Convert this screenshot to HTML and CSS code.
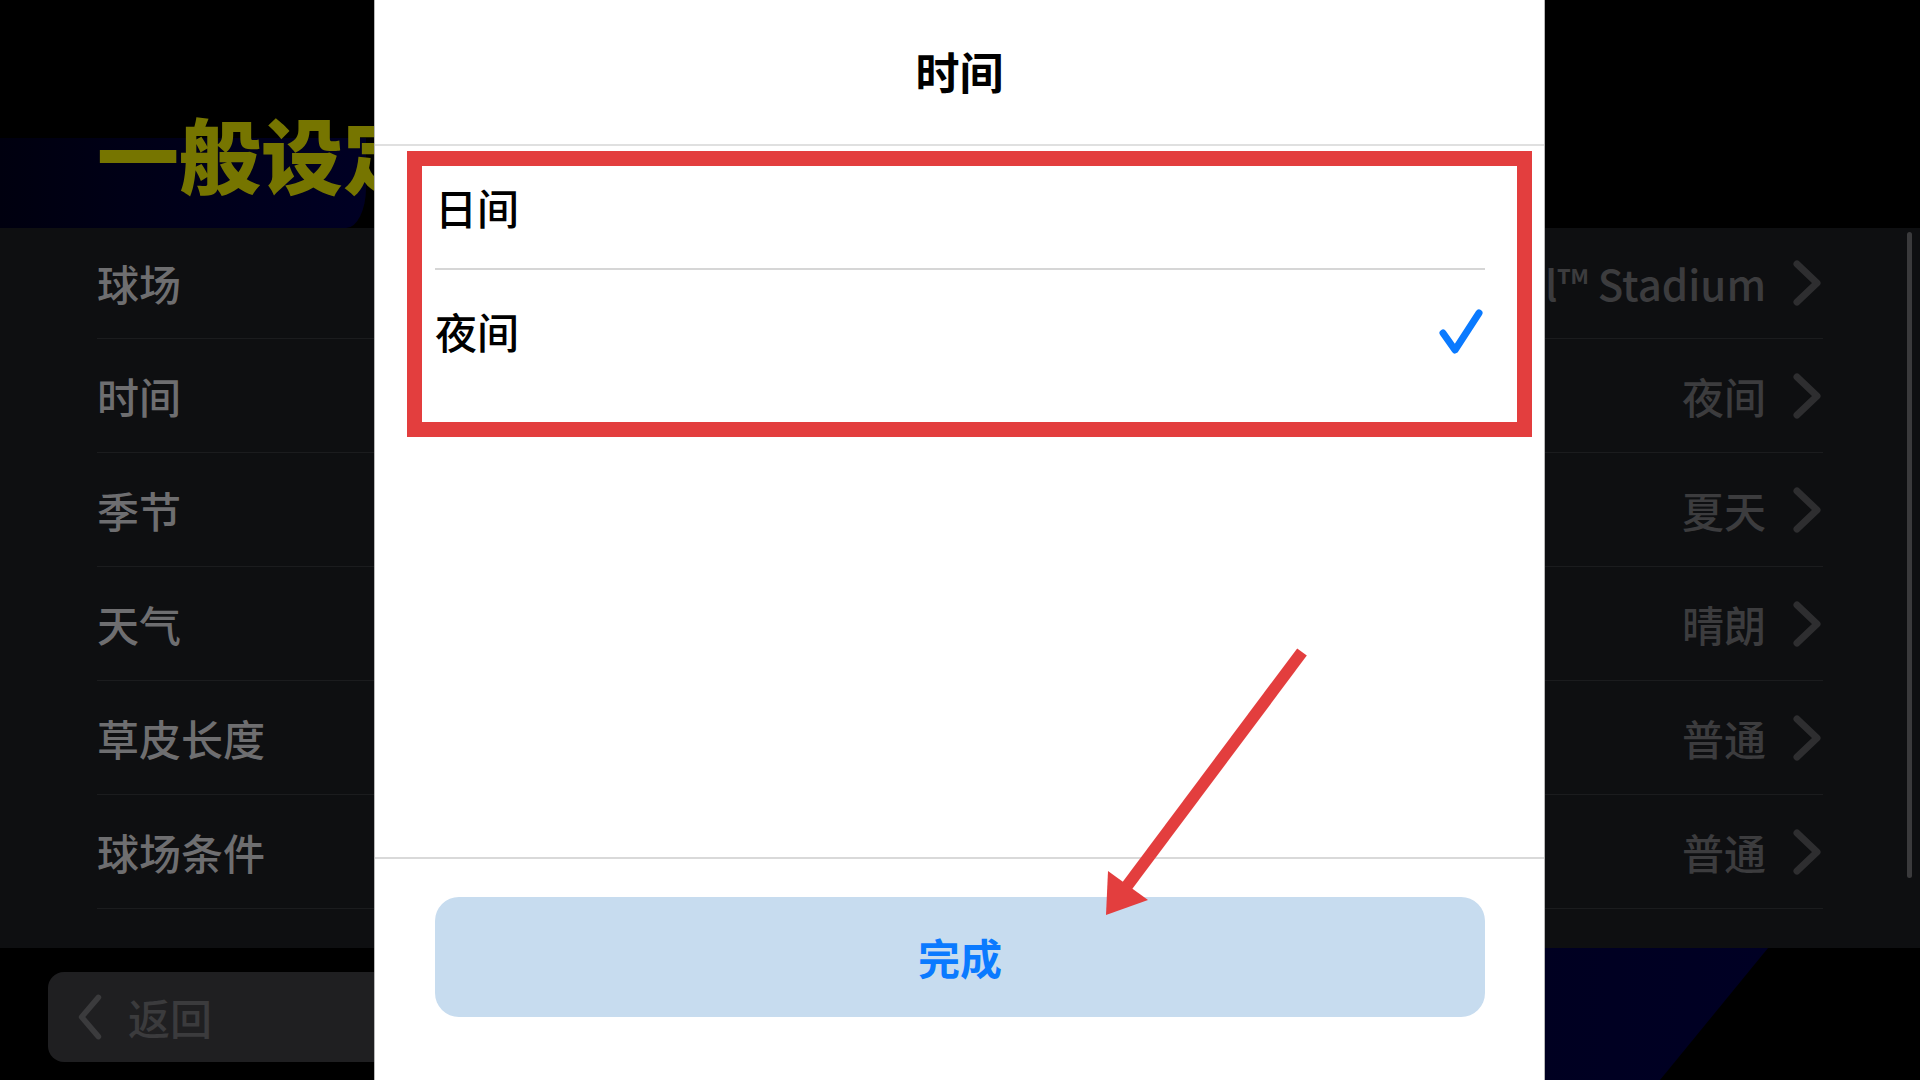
FILE: index.html
```html
<!DOCTYPE html>
<html lang="zh-CN">
<head>
<meta charset="utf-8">
<title>时间</title>
<link rel="stylesheet" href="styles.css">
</head>
<body>
<div class="app">
  <header class="top">
    <h1 class="page-title">一般设定</h1>
  </header>
  <main class="list-wrap">
    <ul class="list">
      <li class="row"><span class="label">球场</span><span class="value">eFootball™ Stadium</span><svg class="chev" viewBox="0 0 30 48"><path d="M5 5 L25 24 L5 43"/></svg></li>
      <li class="row"><span class="label">时间</span><span class="value">夜间</span><svg class="chev" viewBox="0 0 30 48"><path d="M5 5 L25 24 L5 43"/></svg></li>
      <li class="row"><span class="label">季节</span><span class="value">夏天</span><svg class="chev" viewBox="0 0 30 48"><path d="M5 5 L25 24 L5 43"/></svg></li>
      <li class="row"><span class="label">天气</span><span class="value">晴朗</span><svg class="chev" viewBox="0 0 30 48"><path d="M5 5 L25 24 L5 43"/></svg></li>
      <li class="row"><span class="label">草皮长度</span><span class="value">普通</span><svg class="chev" viewBox="0 0 30 48"><path d="M5 5 L25 24 L5 43"/></svg></li>
      <li class="row"><span class="label">球场条件</span><span class="value">普通</span><svg class="chev" viewBox="0 0 30 48"><path d="M5 5 L25 24 L5 43"/></svg></li>
      <li class="row row-peek"><span class="peek-mark"></span><svg class="chev" viewBox="0 0 30 48"><path d="M5 5 L25 24 L5 43"/></svg></li>
    </ul>
    <div class="scrollbar"></div>
  </main>
  <footer class="bottom">
    <button class="back"><svg class="back-chev" viewBox="0 0 30 50"><path d="M24 4 L6 25 L24 46"/></svg><span>返回</span></button>
  </footer>
</div>

<section class="sheet">
  <div class="sheet-head">时间</div>
  <div class="options">
    <div class="option">日间</div>
    <div class="option">夜间<svg class="check" viewBox="0 0 46 46"><path d="M5 25 L17 42 L41 5"/></svg></div>
  </div>
  <div class="sheet-spacer"></div>
  <div class="sheet-foot">
    <button class="done">完成</button>
  </div>
</section>

<div class="highlight"></div>
<svg class="arrow" viewBox="0 0 1920 1080">
  <line x1="1302" y1="652" x2="1124" y2="890"/>
  <polygon points="1106,915 1108,871 1148,900"/>
</svg>
</body>
</html>
```

FILE: styles.css
```css
* { box-sizing: border-box; }

html, body {
  margin: 0;
  padding: 0;
  width: 1920px;
  height: 1080px;
  overflow: hidden;
  background: #000;
  font-family: "Noto Sans CJK SC", "Noto Sans", sans-serif;
}

.app {
  width: 1920px;
  height: 1080px;
  display: flex;
  flex-direction: column;
}

/* ---------- background header ---------- */
.top {
  position: relative;
  height: 228px;
  flex: none;
  background: #000;
}
.top::before {
  content: "";
  position: absolute;
  left: 0;
  top: 138px;
  width: 366px;
  height: 90px;
  background: linear-gradient(90deg, #00000f 0%, #000024 100%);
  border-bottom-right-radius: 20px 40px;
}
.page-title {
  position: relative;
  margin: 0;
  padding: 112px 0 0 97px;
  font-size: 82px;
  line-height: 1;
  font-weight: 900;
  color: #767500;
  white-space: nowrap;
}

/* ---------- background list ---------- */
.list-wrap {
  height: 720px;
  flex: none;
  display: flex;
  background: #0e0f11;
}
.list {
  list-style: none;
  margin: 0 0 0 97px;
  padding: 0;
  width: 1726px;
  height: 720px;
  overflow: hidden;
}
.row {
  height: 114px;
  display: flex;
  align-items: center;
  border-bottom: 1px solid #1b1c1e;
  font-size: 42px;
  line-height: 1;
}
.row:first-child { height: 111px; }
.label { color: #6e6e70; font-weight: 500; }
.value { margin-left: auto; color: #3c3c3e; font-weight: 500; }
.row-peek { align-items: flex-start; padding-top: 38px; }
.peek-mark {
  width: 6px;
  height: 4px;
  margin: 2px 0 0 28px;
  background: #555557;
  border-radius: 2px;
}
.row-peek .chev { margin-left: auto; }
.chev {
  width: 30px;
  height: 48px;
  margin: 0 1px 0 26px;
  fill: none;
  stroke: #2e2e30;
  stroke-width: 7;
  stroke-linecap: round;
  stroke-linejoin: round;
}
.scrollbar {
  width: 5px;
  height: 646px;
  margin: 4px 8px 0 auto;
  background: #3a3a3c;
  border-radius: 3px;
}

/* ---------- background footer ---------- */
.bottom {
  position: relative;
  flex: 1;
  background: #000;
  overflow: hidden;
}
.bottom::before {
  content: "";
  position: absolute;
  inset: 0;
  background: linear-gradient(90deg, #000012 0%, #00001c 60%, #000026 100%);
  clip-path: polygon(700px 0, 1768px 0, 1660px 100%, 600px 100%);
}
.back {
  position: relative;
  margin: 24px 0 0 48px;
  width: 440px;
  height: 90px;
  border: none;
  border-radius: 16px;
  background: #1f1f21;
  display: flex;
  align-items: center;
  padding: 0 0 0 28px;
  font-family: inherit;
  font-size: 42px;
  line-height: 1;
  font-weight: 500;
  color: #3b3b3d;
}
.back-chev {
  width: 28px;
  height: 50px;
  margin-right: 24px;
  fill: none;
  stroke: #3b3b3d;
  stroke-width: 6;
  stroke-linecap: round;
  stroke-linejoin: round;
}

/* ---------- modal sheet ---------- */
.sheet {
  position: absolute;
  left: 374px;
  top: 0;
  width: 1171px;
  height: 1080px;
  background: #fff;
  border-left: 1px solid #b8b8b8;
  border-right: 1px solid #b8b8b8;
  display: flex;
  flex-direction: column;
}
.sheet-head {
  height: 146px;
  flex: none;
  display: flex;
  align-items: center;
  justify-content: center;
  padding-bottom: 2px;
  border-bottom: 2px solid #e0e0e0;
  font-size: 44px;
  line-height: 1;
  font-weight: 700;
  color: #000;
}
.options {
  padding: 0 59px 0 60px;
}
.option {
  height: 122px;
  display: flex;
  align-items: center;
  font-size: 42px;
  line-height: 1;
  font-weight: 500;
  color: #000;
}
.option:first-child {
  height: 124px;
  border-bottom: 2px solid #d6d6d6;
}
.check {
  width: 46px;
  height: 46px;
  margin-left: auto;
  margin-right: 1px;
  fill: none;
  stroke: #0a7aff;
  stroke-width: 7;
  stroke-linecap: round;
  stroke-linejoin: round;
}
.sheet-spacer { flex: 1; }
.sheet-foot {
  flex: none;
  border-top: 2px solid #d9d9d9;
  padding: 38px 59px 63px 60px;
}
.done {
  display: block;
  width: 100%;
  height: 120px;
  border: none;
  border-radius: 24px;
  background: #c7dcef;
  font-family: inherit;
  font-size: 42px;
  line-height: 1;
  font-weight: 700;
  color: #0a7aff;
}

/* ---------- annotations ---------- */
.highlight {
  position: absolute;
  left: 407px;
  top: 151px;
  width: 1125px;
  height: 286px;
  border: 15px solid #e33e3e;
}
.arrow {
  position: absolute;
  left: 0;
  top: 0;
  width: 1920px;
  height: 1080px;
  pointer-events: none;
}
.arrow line {
  stroke: #e33e3e;
  stroke-width: 12;
}
.arrow polygon {
  fill: #e33e3e;
}
```
